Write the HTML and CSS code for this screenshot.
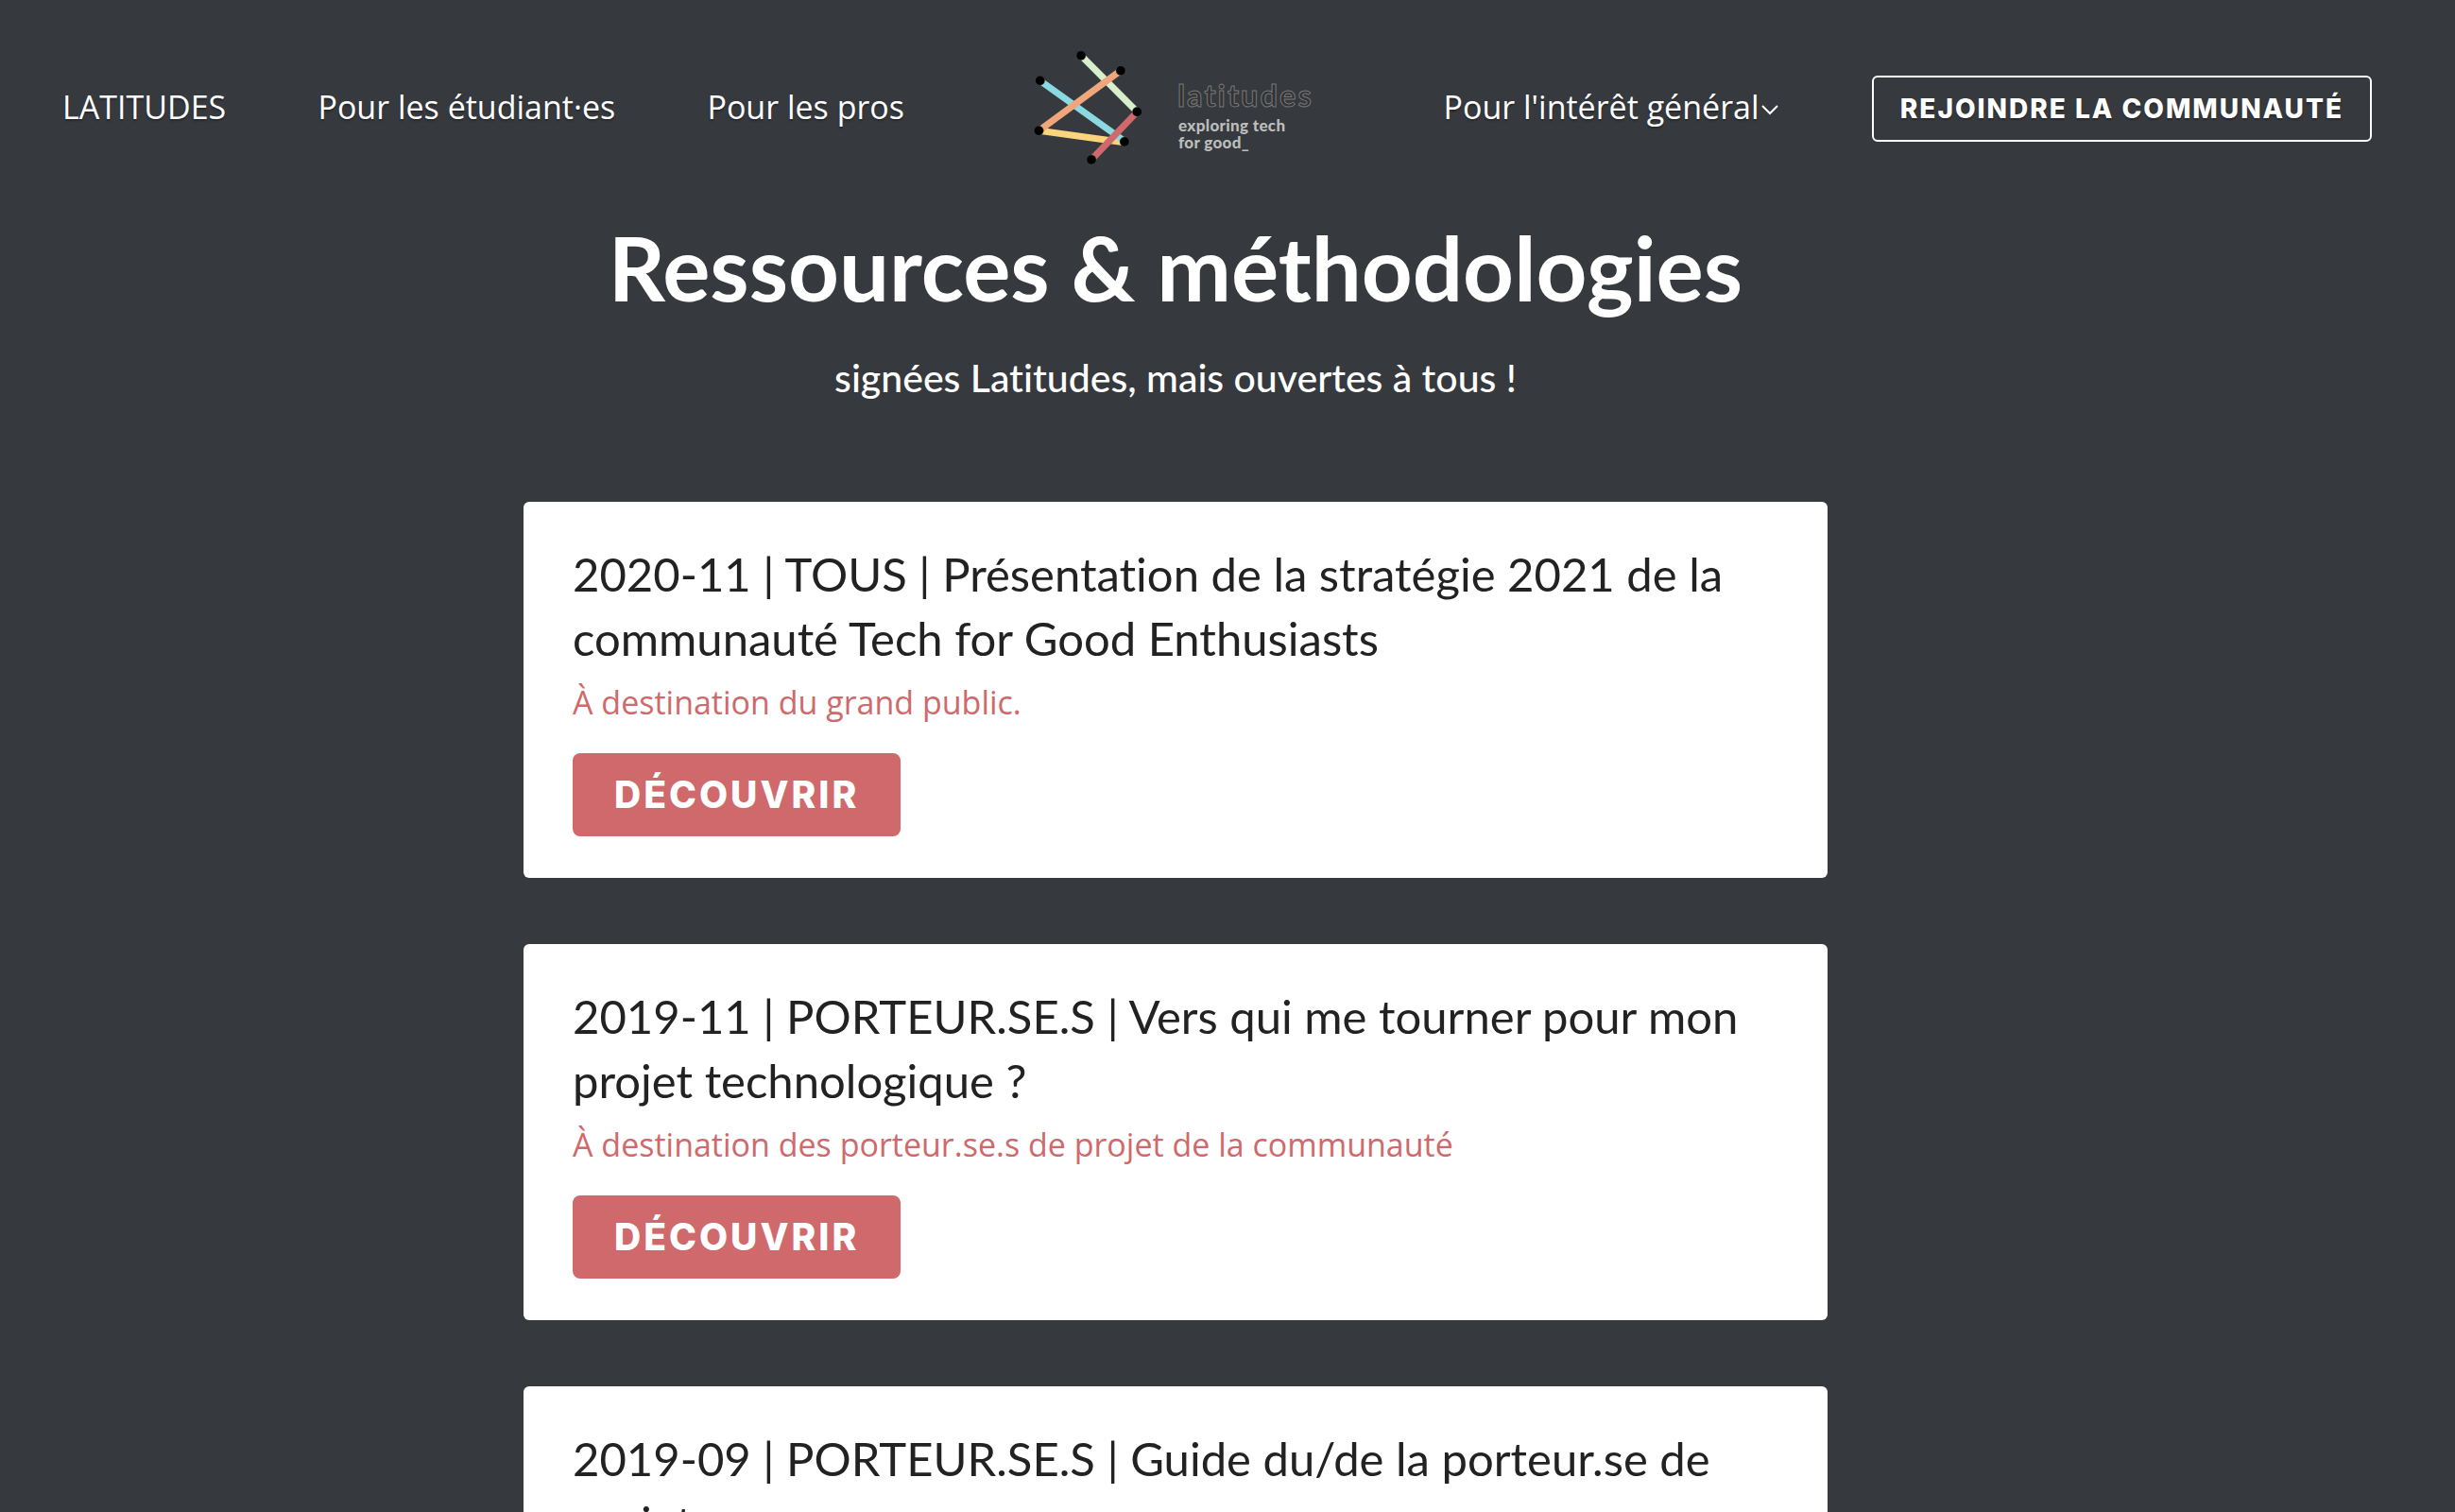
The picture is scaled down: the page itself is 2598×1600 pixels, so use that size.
FILE: index.html
```html
<!DOCTYPE html>
<html lang="fr">
<head>
<meta charset="utf-8">
<meta name="viewport" content="width=device-width, initial-scale=1">
<title>Ressources &amp; méthodologies – Latitudes</title>
<link rel="stylesheet" href="styles.css">
</head>
<body>
<header>
  <nav class="nav">
    <a class="nav-link" href="#latitudes">LATITUDES</a>
    <a class="nav-link" href="#etudiants">Pour les étudiant·es</a>
    <a class="nav-link" href="#pros">Pour les pros</a>
    <a class="logo" href="#accueil" aria-label="Latitudes">
      <svg viewBox="-72 0 1128 447" width="376" height="149" aria-hidden="true">
        <g fill="none" stroke-width="21">
          <path stroke="#fbd57d" d="M64 295 336 332"/>
          <path stroke="#8bd9e1" d="M68 136 336 328"/>
          <path stroke="#d8efcb" d="M198 56 376 235"/>
          <path stroke="#efa67a" d="M324 104 64 295"/>
          <path stroke="#cf696b" d="M376 235 231 387"/>
        </g>
        <g fill="#000" stroke="#54575b" stroke-width="1">
          <circle cx="198" cy="56" r="15"/>
          <circle cx="324" cy="104" r="15"/>
          <circle cx="68" cy="136" r="15"/>
          <circle cx="376" cy="235" r="15"/>
          <circle cx="64" cy="295" r="15"/>
          <circle cx="336" cy="330" r="15"/>
          <circle cx="231" cy="387" r="15"/>
        </g>
        <text class="logo-name" x="504" y="220">latitudes</text>
        <text class="logo-tagline" x="507" y="296">exploring tech</text>
        <text class="logo-tagline" x="507" y="350">for good_</text>
      </svg>
    </a>
    <a class="nav-link" href="#interet-general">Pour l'intérêt général<svg class="chevron" viewBox="0 0 22 14" aria-hidden="true"><path d="M3 3 11 11 19 3"/></svg></a>
    <a class="join" href="#communaute">REJOINDRE LA COMMUNAUTÉ</a>
  </nav>
</header>
<main class="page">
  <h1>Ressources &amp; méthodologies</h1>
  <p class="subtitle">signées Latitudes, mais ouvertes à tous !</p>
  <div class="cards">
    <article class="card">
      <h2>2020-11 | TOUS | Présentation de la stratégie 2021 de la communauté Tech for Good Enthusiasts</h2>
      <p class="audience">À destination du grand public.</p>
      <a class="discover" href="#strategie-2021">DÉCOUVRIR</a>
    </article>
    <article class="card">
      <h2>2019-11 | PORTEUR.SE.S | Vers qui me tourner pour mon projet technologique ?</h2>
      <p class="audience">À destination des porteur.se.s de projet de la communauté</p>
      <a class="discover" href="#projet-technologique">DÉCOUVRIR</a>
    </article>
    <article class="card">
      <h2>2019-09 | PORTEUR.SE.S | Guide du/de la porteur.se de projet</h2>
    </article>
  </div>
</main>
</body>
</html>
```
FILE: styles.css
```css
* {
  box-sizing: border-box;
}

body {
  margin: 0;
  background: #36393e;
  color: #fff;
  font-family: "Open Sans", "Liberation Sans", sans-serif;
  font-variant-ligatures: none;
}

a {
  color: inherit;
  text-decoration: none;
}

h1,
h2,
p {
  margin: 0;
}

.nav {
  display: flex;
  align-items: center;
  justify-content: space-between;
  padding: 40px 88px 38px 66px;
}

.nav-link {
  padding-bottom: 4px;
  font-size: 34px;
  line-height: 48px;
  white-space: nowrap;
  text-shadow: 0 2px 2px rgba(0, 0, 0, 0.3);
}

.logo svg {
  display: block;
}

.logo-name {
  font: 700 98px Lato, sans-serif;
  letter-spacing: 6px;
  fill: #333;
  stroke: #77787a;
  stroke-width: 3px;
}

.logo-tagline {
  font: 900 51px Lato, sans-serif;
  letter-spacing: 1px;
  fill: #bdbdbd;
}

.chevron {
  width: 22px;
  height: 14px;
  margin-bottom: 3px;
  fill: none;
  stroke: #fff;
  stroke-width: 2px;
}

.join {
  padding: 0 28px;
  border: 2px solid #fff;
  border-radius: 6px;
  font-family: Inter, "Liberation Sans", sans-serif;
  font-size: 28px;
  font-weight: 800;
  line-height: 66px;
  letter-spacing: 2px;
  white-space: nowrap;
  text-shadow: 0 2px 2px rgba(0, 0, 0, 0.3);
}

.page {
  padding: 0 110px 70px 0;
}

h1 {
  font: 700 94px/112px Lato, sans-serif;
  font-variant-ligatures: none;
  text-align: center;
}

.subtitle {
  margin-top: 31px;
  font: 500 41px/60px Lato, sans-serif;
  font-variant-ligatures: none;
  text-align: center;
}

.cards {
  display: grid;
  gap: 70px;
  max-width: 1380px;
  margin: 101px auto 0;
}

.card {
  padding: 42px 52px 44px;
  border-radius: 6px;
  background: #fff;
  color: #222;
}

.card h2 {
  font: 400 49px/68px Lato, sans-serif;
  font-variant-ligatures: none;
}

.audience {
  margin-top: 10px;
  color: #cf696b;
  font-size: 34px;
  line-height: 48px;
}

.discover {
  display: block;
  width: fit-content;
  margin-top: 30px;
  padding: 0 44px;
  border-radius: 8px;
  background: #cf696b;
  color: #fff;
  font-family: Inter, "Liberation Sans", sans-serif;
  font-size: 39px;
  font-weight: 800;
  line-height: 88px;
  letter-spacing: 3px;
}
```
